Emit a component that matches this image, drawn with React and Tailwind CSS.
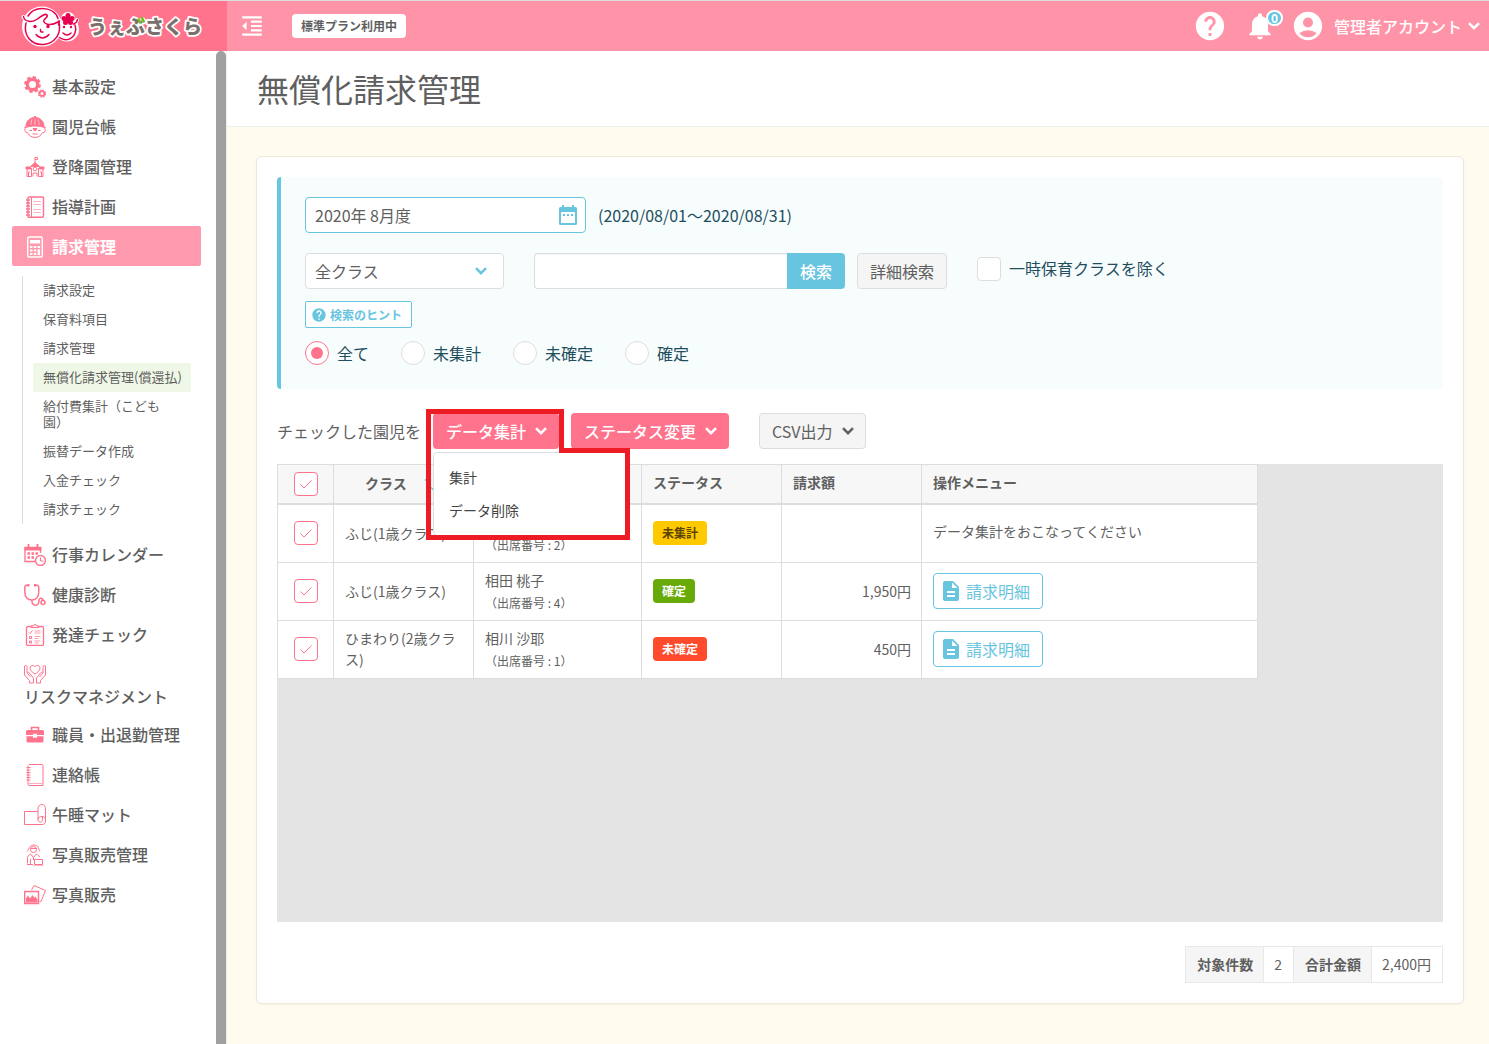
import React, { useState } from 'react';
import {
    MdAccountCircle,
    MdDescription,
    MdFormatIndentDecrease,
    MdHelp,
    MdNotifications,
} from 'react-icons/md';

const Chevron = ({ className = '' }) => (
    <svg className={`size-6 shrink-0 ${className}`} viewBox="0 0 24 24" fill="none" stroke="currentColor" strokeWidth="2.500">
        <path d="m7 9.200 5 5 5-5" />
    </svg>
);

const CalendarIcon = ({ className }) => (
    <svg className={className} width="24" height="24" viewBox="0 0 24 24" fill="currentColor">
        <path d="M6 2h2v2h8V2h2v2h1.500Q21 4 21 5.500v15q0 1.500-1.500 1.500h-15Q3 22 3 20.500v-15Q3 4 4.500 4H6zM5 9v11h14V9z" fillRule="evenodd" />
        <path d="M7 11h2v2H7zM11 11h2v2h-2zM15 11h2v2h-2z" />
    </svg>
);

const Line = ({ children, w = 1 }) => (
    <svg className="size-[22px] shrink-0" viewBox="0 0 22 22" fill="none" stroke="currentColor" strokeWidth={w}>{children}</svg>
);

const icons = {
    gears: (
        <Line w={3.4}>
            <circle cx="8.5" cy="8.5" r="5.2" />
            <circle cx="8.5" cy="8.5" r="7.2" strokeWidth="2.4" strokeDasharray="3.2 2.45" />
            <circle cx="18" cy="17.6" r="2.4" strokeWidth="1.8" />
            <circle cx="18" cy="17.6" r="3.6" strokeWidth="1.2" strokeDasharray="1.6 1.23" />
        </Line>
    ),
    child: (
        <Line>
            <path d="M2 10.500C2 5 6 1.500 11 1.500s9 3.500 9 9l1.500 1.500c-3-1.400-7-2-10.500-2s-7.500.6-10.500 2z" fill="currentColor" />
            <path d="M8 3.500c-1 2-1 4-1 5.500M14 3.500c1 2 1 4 1 5.500M11 3v6" stroke="#ffc4cf" />
            <path d="M10 .8h2" strokeWidth="1.600" />
            <path d="M2 12.500c-2 .6-2 4 1.500 4.200C5 19.800 8 21.400 11 21.400s6-1.600 7.500-4.700c3.500-.2 3.500-3.600 1.500-4.200" />
            <path d="M5.500 14.500h2.500M14 14.500h2.500M8.500 18h5" />
            <path d="M8.500 12h5l-1.500 3h-2z" fill="currentColor" stroke="none" />
        </Line>
    ),
    school: (
        <Line>
            <path d="M11 1v6M11 1.500h2.500v2H11" />
            <path d="M6.500 10.500 11 6.500l4.500 4z" fill="currentColor" />
            <path d="M2 11h4.500v2H2zM15.500 11H20v2h-4.500z" fill="currentColor" />
            <path d="M3 13v7.500h4.500V12M19 13v7.500h-4.500V12M9 20.500V17h4v3.500M4.500 20v-4h1.500M17.500 20v-4H16" />
            <circle cx="11" cy="13" r="1.800" />
        </Line>
    ),
    plan: (
        <Line>
            <rect x="4" y="1" width="15.500" height="20.200" rx="1" strokeWidth="1.400" />
            <path d="M7.500 1v20" />
            <path d="M2 4h4M2 7h4M2 10h4M2 13h4M2 16h4M2 19h4" strokeWidth="1.400" />
            <path d="M9.500 5.500h7.500M9.500 8.500h7.500M9.500 13.500h7.500M9.500 16.500h7.500" opacity=".55" />
        </Line>
    ),
    calc: (
        <Line w={1.4}>
            <rect x="3.700" y="1" width="14.600" height="20" rx="1.500" />
            <path d="M6 4h10v3.500H6z" fill="currentColor" stroke="none" />
            <path d="M6 11h2.500M9.800 11h2.500M13.600 11h2.500M6 14.500h2.500M9.800 14.500h2.500M6 18h2.500M9.800 18h2.500" strokeWidth="2.200" />
            <path d="M14.800 13.400v5.700" strokeWidth="2.400" />
        </Line>
    ),
    calendar: (
        <Line>
            <path d="M16.500 9V3.500H1v14h10" strokeWidth="1.300" />
            <path d="M.5 3h17v3.500H.5z" fill="currentColor" stroke="none" />
            <path d="M4.500 0v4.500M13.500 0v4.500" strokeWidth="1.800" />
            <path d="M3.500 9.500h2.500M7.500 9.500H10M11.500 9.500H14M3.500 13.500h2.500M7.500 13.500H10" strokeWidth="2.400" />
            <circle cx="16.500" cy="16.500" r="5" strokeWidth="1.400" fill="white" />
            <path d="M16.500 13.500v3.500h3" />
        </Line>
    ),
    stethoscope: (
        <Line w={1.5}>
            <path d="M4.500 1.200H2.500C1 1.200.8 2.500.8 4v4c0 5 3 8 7 8s7-3 7-8V4c0-1.500-.2-2.800-1.700-2.800h-2" />
            <path d="M4.500 0v2.600M11 0v2.600" strokeWidth="2" />
            <path d="M7.800 16c0 3.500 1.500 5.200 4 5.200 5 0 1.500-7 5-7 2 0 2.200 1.300 2.200 2.500" />
            <circle cx="19" cy="18.500" r="2" />
        </Line>
    ),
    checklist: (
        <Line>
            <rect x="2.500" y="2.500" width="17" height="19" rx="1.500" strokeWidth="1.300" />
            <path d="M7 3.500V2h2.500a1.500 1.500 0 0 1 3 0H15v1.500z" fill="white" />
            <path d="m5 8.500 1 1 2.500-3M5.500 12.500h2v2h-2zM5.500 17h2v2h-2z" />
            <path d="M10.500 7h6M10.500 9h6M10.500 12.500h6M10.500 14.500h4M10.500 17h6M10.500 19h4" opacity=".7" />
        </Line>
    ),
    hands: (
        <Line>
            <path d="M11 11C8 9 6 7.500 6 5c0-2.800 3.800-3.500 5-1.200C12.200 1.500 16 2.200 16 5c0 2.500-2 4-5 6z" />
            <path d="M.5 3v9l5 5.500V20h4v-5L5 9.500c-.8-.8-2 .2-1.300 1.200L6.500 14M.5 3c2-1 2.500 0 2.500 1.500V10" />
            <path d="M21.500 3v9l-5 5.500V20h-4v-5L17 9.500c.8-.8 2 .2 1.300 1.200L15.500 14M21.500 3c-2-1-2.500 0-2.500 1.500V10" />
        </Line>
    ),
    briefcase: (
        <Line w={1.6}>
            <path d="M7.500 6V3.500h7V6" />
            <path d="M3.500 6h15q1.500 0 1.500 1.500V11H13V9.800H9V11H2V7.500Q2 6 3.500 6z" fill="currentColor" stroke="none" />
            <path d="M2.500 12.200H9v1.600h4v-1.600h6.500V17q0 1.500-1.500 1.500H4q-1.500 0-1.500-1.500z" fill="currentColor" stroke="none" />
        </Line>
    ),
    notebook: (
        <Line>
            <path d="M5 .5h13q1 0 1 1v20H5q-1-.5-1-1.500V1.500" />
            <path d="M5 19.500h13" opacity=".6" />
            <path d="M2.500 3.500h4M2.500 6h4M2.500 8.500h4M2.500 11h4M2.500 13.500h4M2.500 16h4" />
        </Line>
    ),
    mat: (
        <Line>
            <path d="M14 7.500H.5v13H18c2.500 0 3.500-1.500 3.500-3.500V5c0-2.500-1-4.500-3.500-4.500S14 2.500 14 5v10.500" />
            <path d="M21.500 15.500c0-2-1.500-3-3.500-3s-4 1-4 3 1 2.500 2.500 2.500 2-1 2-2.500v-3" />
        </Line>
    ),
    photographer: (
        <Line>
            <path d="M3 7.500C5 6 5 1 10 1s4.500 5 6 6.500M6.500 4.500h6.500" />
            <circle cx="9.500" cy="5.500" r="3" />
            <path d="M3.500 19.500v-5c0-2 1-3.500 3-4.500l3 3.500 3-3.500c1.500.5 2.500 1.500 3 3M6.500 20v-5M3 20.500h6M9.500 13.500V16" />
            <path d="M10.500 15.500h8v5h-8zM9 22h10.500" />
        </Line>
    ),
    photos: (
        <Line>
            <path d="M.7 7.500h13.800v12H.7z" strokeWidth="1.400" />
            <path d="M2 18.500v-4l2-3 2 3 2.500-3.500 2 3 1-1.500 2 3v3z" fill="currentColor" stroke="none" />
            <path d="m7.500 6 2.500-4.500 11.500 5L17 17.500h-1.500" />
        </Line>
    ),
};

const navTop = [
    ['gears', '基本設定'],
    ['child', '園児台帳'],
    ['school', '登降園管理'],
    ['plan', '指導計画'],
];

const subItems = [
    '請求設定',
    '保育料項目',
    '請求管理',
    '無償化請求管理(償還払)',
    '給付費集計（こども園）',
    '振替データ作成',
    '入金チェック',
    '請求チェック',
];

const navBottom = [
    ['calendar', '行事カレンダー'],
    ['stethoscope', '健康診断'],
    ['checklist', '発達チェック'],
    ['hands', 'リスクマネジメント'],
    ['briefcase', '職員・出退勤管理'],
    ['notebook', '連絡帳'],
    ['mat', '午睡マット'],
    ['photographer', '写真販売管理'],
    ['photos', '写真販売'],
];

const rows = [
    { cls: 'ふじ(1歳クラス)', name: '', no: 2, status: '未集計', amount: '' },
    { cls: 'ふじ(1歳クラス)', name: '相田 桃子', no: 4, status: '確定', amount: '1,950円' },
    { cls: 'ひまわり(2歳クラス)', name: '相川 沙耶', no: 1, status: '未確定', amount: '450円' },
];

const statusStyle = {
    未集計: 'bg-[#ffc900] text-[#5c4400]',
    確定: 'bg-[#68ab08] text-white',
    未確定: 'bg-[#ff4b2b] text-white',
};

function Logo() {
    return (
        <svg className="h-[50px] w-[220px]" viewBox="0 0 220 50" role="img" aria-label="うぇぶさくら">
            <g fill="white" stroke="white" strokeWidth="4" strokeLinecap="round">
                <circle cx="42" cy="25.500" r="18" />
                <circle cx="67" cy="28.500" r="10" />
                <circle cx="68" cy="18" r="5" />
                <path d="M23.500 16l4 4M77 19l-3 6" />
            </g>
            <g fill="none" stroke="#e60050" strokeWidth="1.500" strokeLinecap="round" strokeLinejoin="round">
                <path d="M28 15C31 10 36 7.500 42 7.500c8 0 14 4 16 10M26 22c-3 12 5 21.500 16 21.500 10 0 16.500-7 17.500-15 .3-3 0-6-1-8.500" />
                <path d="M23.500 15.500c1 6 9 6 14 2.500 4-3 7.500-6 9.500-4 1.500 2-2 3-3 5-1.500 4 6 6.500 14 2" />
                <path d="M36 33.500q6.500 7 13 0M40.500 28.500q-.5 3 2.500 2.500" />
                <path d="M59.500 36.500c6 4.500 13 2 15.500-4.500 1-3 .8-6 0-8M77.500 18.500q-.5 3.500-4 4.500M59.500 20q-1 2-1 4M63 32q4 4 8 0" />
            </g>
            <g fill="#e60050">
                <circle cx="35" cy="25.500" r="1.700" />
                <circle cx="48" cy="25.500" r="1.700" />
                <circle cx="64" cy="26" r="1.200" />
                <circle cx="71" cy="26" r="1.200" />
                <circle cx="68" cy="14.500" r="2.500" />
                <circle cx="72" cy="17.500" r="2.500" />
                <circle cx="70.500" cy="21.500" r="2.500" />
                <circle cx="65.500" cy="21.500" r="2.500" />
                <circle cx="64" cy="17.500" r="2.500" />
                <circle cx="68" cy="18.500" r="3" />
            </g>
            <text
                x="88" y="33" fontSize="19" fontWeight="900" fill="#7a6f6b" stroke="white" strokeWidth="3.500"
                strokeLinejoin="round" paintOrder="stroke"
            >
                うぇぶさくら
            </text>
            <path d="m138.500 18.500 1.500 3M142 17l1.500 3" stroke="#6fc21a" strokeWidth="2.500" strokeLinecap="round" />
        </svg>
    );
}

function Check({ label, checked, onChange }) {
    return (
        <span className="relative inline-grid size-6 place-items-center align-middle">
            <input type="checkbox" aria-label={label} checked={checked} onChange={onChange}
                className="size-6 appearance-none rounded-sm border border-[#ddd] bg-white checked:border-[#ff738c]" />
            {checked && (
                <svg className="pointer-events-none absolute" width="12" height="9" viewBox="0 0 12 9" fill="none" stroke="#ff738c">
                    <path d="M.5 4.500 4 8 11.500.5" />
                </svg>
            )}
        </span>
    );
}

function NavItem({ icon, label }) {
    const stacked = label === 'リスクマネジメント';
    return (
        <li>
            <a href="#" className={stacked ? 'flex h-[60px] flex-col px-3 pt-[7px]' : 'flex h-10 items-center gap-[6px] px-3'}>
                <span className="pt-0.5 text-[#ff738c]">{icons[icon]}</span>
                <span className="leading-[22px] whitespace-nowrap">{label}</span>
            </a>
        </li>
    );
}

function Sidebar() {
    return (
        <aside className="flex w-[227px] shrink-0 border-r border-[#eee] bg-white">
            <nav className="flex-1 pt-[15px] pr-[15px] pl-3 text-base font-medium text-[#5f5f5f]">
                <ul>
                    {navTop.map(([icon, label]) => <NavItem key={label} icon={icon} label={label} />)}
                    <li>
                        <a href="#" className="flex h-10 items-center gap-[6px] rounded-xs bg-[#ff9aae] px-3 font-bold text-white">
                            <span className="pt-0.5">{icons.calc}</span>
                            請求管理
                        </a>
                        <ul className="my-[10px] mr-[10px] ml-[10px] border-l border-[#ddd] pl-[10px] text-[13px] leading-4 font-normal">
                            {subItems.map(label => (
                                <li key={label}>
                                    <a href="#" className={`block rounded-xs pt-[6px] pb-[7px] pl-[10px] ${label.startsWith('無償化') ? 'bg-[#eff7e6] whitespace-nowrap' : 'pr-5'}`}>
                                        {label}
                                    </a>
                                </li>
                            ))}
                        </ul>
                    </li>
                    {navBottom.map(([icon, label]) => <NavItem key={label} icon={icon} label={label} />)}
                </ul>
            </nav>
            <div className="w-[10px] rounded-t-full bg-[#9f9f9f]" />
        </aside>
    );
}

function Header() {
    return (
        <header className="flex h-[51px] border-t border-[#ddd] bg-[#ff94a8] text-white">
            <a href="#" className="flex w-[227px] items-center bg-[#ff738c]"><Logo /></a>
            <button aria-label="メニューを閉じる" className="ml-3"><MdFormatIndentDecrease size={26} /></button>
            <span className="ml-[27px] self-center rounded-sm bg-white px-[9px] text-xs leading-6 font-bold text-[#5f5f5f]">標準プラン利用中</span>
            <div className="ml-auto flex items-center pr-[3px]">
                <button aria-label="ヘルプ"><MdHelp size={34} /></button>
                <button aria-label="お知らせ" className="relative ml-[17px]">
                    <MdNotifications size={32} />
                    <span className="absolute top-0 -right-[7px] h-4 w-[17px] rounded-full border-2 border-white bg-[#68c5e0] text-center text-xs leading-3 font-bold">0</span>
                </button>
                <button className="ml-[15px] flex items-center text-base font-medium">
                    <MdAccountCircle size={34} />
                    <span className="ml-[9px]">管理者アカウント</span>
                    <Chevron />
                </button>
            </div>
        </header>
    );
}

function Filters() {
    const [status, setStatus] = useState('全て');
    const [exclude, setExclude] = useState(false);

    return (
        <form className="rounded-sm border-l-4 border-[#68c5e0] bg-[#f7fdfd] px-6 pt-5 pb-6 text-base text-[#1f4e5f]" onSubmit={e => e.preventDefault()}>
            <div className="flex items-center gap-3">
                <div className="relative">
                    <input aria-label="対象年月" defaultValue="2020年 8月度"
                        className="block h-9 w-[281px] rounded-sm border border-[#68c5e0] bg-white px-[9px] text-[#5f5f5f]" />
                    <CalendarIcon className="pointer-events-none absolute top-[6px] right-[6px] text-[#68c5e0]" />
                </div>
                <span>(2020/08/01～2020/08/31)</span>
            </div>
            <div className="mt-5 flex">
                <div className="relative">
                    <select aria-label="クラス" className="block h-9 w-[199px] appearance-none rounded-sm border border-[#ddd] bg-white px-[9px] text-[#5f5f5f]">
                        <option>全クラス</option>
                    </select>
                    <Chevron className="pointer-events-none absolute top-[6px] right-[11px] text-[#68c5e0]" />
                </div>
                <input aria-label="検索キーワード" className="ml-[30px] h-9 w-[253px] rounded-l-sm border border-r-0 border-[#ddd] bg-white px-[9px] inset-shadow-xs" />
                <button className="h-9 rounded-r-sm bg-[#68c5e0] px-[13px] font-medium text-white">検索</button>
                <button type="button" className="ml-3 h-9 rounded-sm border border-[#ddd] bg-[#f5f5f5] px-3 text-[#5f5f5f]">詳細検索</button>
                <label className="mt-1 ml-[30px] flex h-6 items-center gap-2">
                    <Check label="一時保育クラスを除く" checked={exclude} onChange={() => setExclude(!exclude)} />
                    <span className="pb-0.5">一時保育クラスを除く</span>
                </label>
            </div>
            <button type="button" className="mt-3 flex h-[27px] items-center rounded-xs border border-[#68c5e0] bg-white pr-[9px] pl-[5px] text-xs font-bold text-[#68c5e0]">
                <MdHelp size={16} className="mr-[3px]" />
                検索のヒント
            </button>
            <div className="mt-[13px] flex gap-8">
                {['全て', '未集計', '未確定', '確定'].map(s => (
                    <label key={s} className="flex items-center gap-2">
                        <input type="radio" name="status" checked={status === s} onChange={() => setStatus(s)}
                            className="grid size-6 appearance-none place-items-center rounded-full border border-[#ddd] bg-white before:size-3 before:rounded-full checked:border-[#ff738c] checked:before:bg-[#ff738c]" />
                        {s}
                    </label>
                ))}
            </div>
        </form>
    );
}

function Toolbar() {
    return (
        <div className="mt-6 flex items-center text-base text-[#5f5f5f]">
            <span>チェックした園児を</span>
            <div className="relative ml-3">
                <button className="flex h-9 items-center gap-[3px] rounded-sm bg-[#ff738c] pr-[6px] pl-[13px] font-medium text-white">
                    データ集計<Chevron />
                </button>
                <ul className="absolute top-[39px] left-0 z-10 w-[194px] rounded-sm border border-[#ddd] bg-white pt-[7px] pb-[9px] text-sm text-[#444]">
                    <li><button className="block h-[33px] w-full px-[15px] text-left">集計</button></li>
                    <li><button className="block h-[33px] w-full px-[15px] text-left">データ削除</button></li>
                </ul>
                {/* red marker round the open menu */}
                <svg className="pointer-events-none absolute -top-1 -left-[7px] z-20" width="204" height="131" fill="none" stroke="#ed1c24" strokeWidth="5">
                    <path d="M2.500 2.500H135.500V41.500H201.500V128.500H2.500z" />
                </svg>
            </div>
            <button className="ml-3 flex h-9 items-center gap-[3px] rounded-sm bg-[#ff738c] pr-[6px] pl-[13px] font-medium text-white">
                ステータス変更<Chevron />
            </button>
            <button className="ml-[30px] flex h-9 items-center gap-[3px] rounded-sm border border-[#ddd] bg-[#f5f5f5] pr-[5px] pl-3">
                CSV出力<Chevron />
            </button>
        </div>
    );
}

function BillingTable() {
    const [checked, setChecked] = useState([true, true, true]);
    const all = checked.every(Boolean);
    const toggle = i => setChecked(checked.map((c, j) => (j === i ? !c : c)));
    const th = 'h-[41px] border-t border-r border-b-2 border-[#ddd] px-[11px] pb-[3px] text-left font-bold';
    const td = 'h-[58px] border-r border-b border-[#ddd] px-[11px] pb-px';

    return (
        <div className="mt-[15px] min-h-[458px] bg-[#e4e4e4]">
            <table className="w-[981px] table-fixed border-separate border-spacing-0 border-l border-[#ddd] bg-white text-sm leading-[21px] text-[#5f5f5f]">
                <colgroup>
                    <col className="w-[56px]" />
                    <col className="w-[140px]" />
                    <col className="w-[168px]" />
                    <col className="w-[140px]" />
                    <col className="w-[140px]" />
                    <col />
                </colgroup>
                <thead className="bg-[#f7f7f7]">
                    <tr>
                        <th className="h-[41px] border-t border-r border-b-2 border-[#ddd] text-center">
                            <Check label="全て選択" checked={all} onChange={() => setChecked(checked.map(() => !all))} />
                        </th>
                        <th className="h-[41px] border-t border-r border-b-2 border-[#ddd] pb-px pl-[31px] text-left font-bold">
                            <span className="flex items-center">
                                クラス
                                <svg className="ml-[17px] text-[#68c5e0]" width="14" height="16" viewBox="0 0 14 16" fill="none" stroke="currentColor" strokeWidth="1.500">
                                    <path d="M1 4.500 4 1.500 7 4.500M4 2v11M7 11.500l3 3 3-3M10 14V3" />
                                </svg>
                            </span>
                        </th>
                        <th className={th} />
                        <th className={th}>ステータス</th>
                        <th className={th}>請求額</th>
                        <th className={th}>操作メニュー</th>
                    </tr>
                </thead>
                <tbody>
                    {rows.map((r, i) => (
                        <tr key={i}>
                            <td className="h-[58px] border-r border-b border-[#ddd] pb-px text-center">
                                <Check label={r.cls} checked={checked[i]} onChange={() => toggle(i)} />
                            </td>
                            <td className={td}>{r.cls}</td>
                            <td className={td}>
                                <div className="h-6 leading-6">{r.name}</div>
                                <div className="text-xs leading-[22px]">（出席番号 : {r.no}）</div>
                            </td>
                            <td className={td}>
                                <span className={`block w-fit rounded-sm px-[9px] text-xs leading-6 font-bold ${statusStyle[r.status]}`}>{r.status}</span>
                            </td>
                            <td className="h-[58px] border-r border-b border-[#ddd] px-[10px] text-right">{r.amount}</td>
                            <td className={td}>
                                {r.amount ? (
                                    <button className="flex h-9 items-center gap-[3px] rounded-sm border border-[#68c5e0] bg-white pr-3 pl-[5px] text-base text-[#68c5e0]">
                                        <MdDescription size={24} />請求明細
                                    </button>
                                ) : <p className="pb-[3px]">データ集計をおこなってください</p>}
                            </td>
                        </tr>
                    ))}
                </tbody>
            </table>
        </div>
    );
}

function Summary() {
    const th = 'h-9 border border-[#e8e8e8] bg-[#f5f5f5] pr-[10px] pl-[11px] font-bold';
    const td = 'h-9 border border-[#e8e8e8] pr-[11px] pl-[10px]';
    return (
        <table className="mt-6 ml-auto border-collapse text-sm leading-[21px] text-[#5f5f5f]">
            <tbody>
                <tr>
                    <th className={th}>対象件数</th>
                    <td className={td}>2</td>
                    <th className={th}>合計金額</th>
                    <td className={td}>2,400円</td>
                </tr>
            </tbody>
        </table>
    );
}

export default function App() {
    return (
        <div className="flex min-h-screen flex-col bg-[#fffbef] font-['Noto_Sans_CJK_JP','Noto_Sans',sans-serif]">
            <Header />
            <div className="flex flex-1">
                <Sidebar />
                <main className="min-w-0 flex-1">
                    <h1 className="flex h-[76px] items-center border-b border-[#eee] bg-white pb-0.5 pl-[30px] text-[32px] text-[#5f5f5f]">無償化請求管理</h1>
                    <section className="mt-[29px] mr-[25px] mb-10 ml-[29px] rounded-md border border-[#ede9dd] bg-white p-5 shadow-xs">
                        <Filters />
                        <Toolbar />
                        <BillingTable />
                        <Summary />
                    </section>
                </main>
            </div>
        </div>
    );
}
